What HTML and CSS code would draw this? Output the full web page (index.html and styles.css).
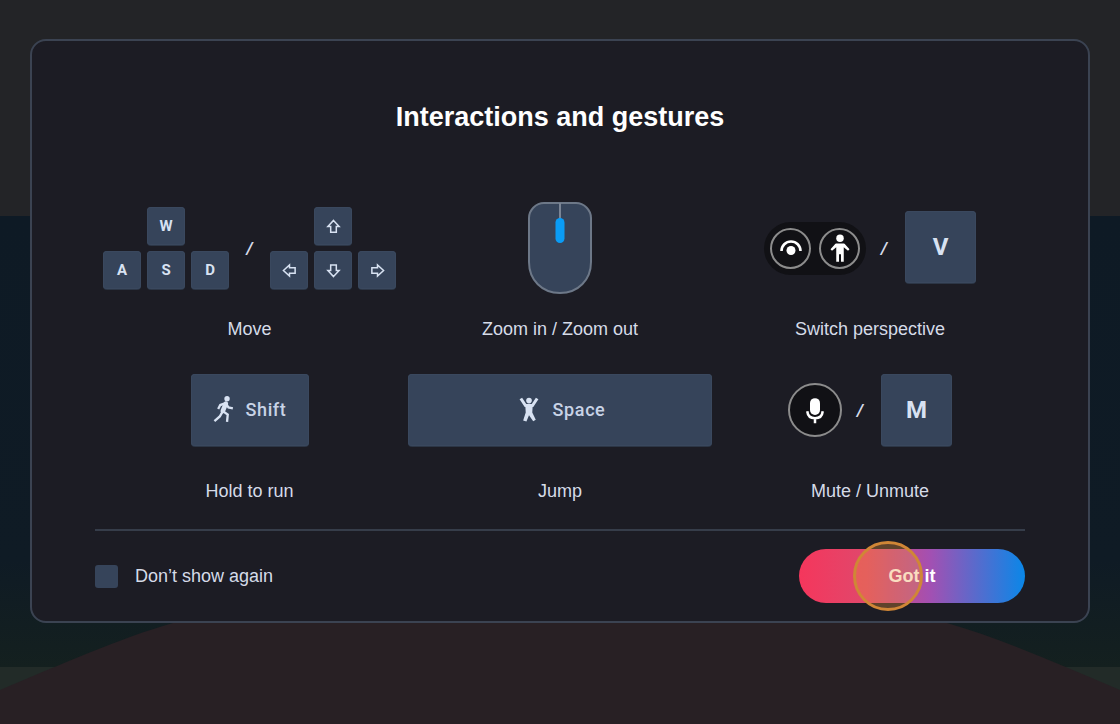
FILE: index.html
```html
<!DOCTYPE html>
<html lang="en">
<head>
    <meta charset="UTF-8">
    <meta name="viewport" content="width=device-width, initial-scale=1.0">
    <title>Interactions and gestures</title>
    <link rel="stylesheet" href="styles.css">
</head>
<body>
<svg class="scenery" viewBox="0 0 1120 724" width="1120" height="724" aria-hidden="true">
    <path class="ground" d="M0 667H1120V724H0Z"/>
    <path class="hill" d="M0 690C60 665 120 638 173 623C250 605 400 600 560 600C720 600 870 605 947 623C1000 638 1060 665 1120 690V724H0Z"/>
</svg>

<div class="modal">
    <h1 class="title">Interactions and gestures</h1>

    <div class="controls">
        <div class="control">
            <div class="control-keys">
                <div class="key-cluster">
                    <span class="key key-small key-top">W</span>
                    <span class="key key-small">A</span>
                    <span class="key key-small">S</span>
                    <span class="key key-small">D</span>
                </div>
                <span class="slash slash-wide">/</span>
                <div class="key-cluster">
                    <span class="key key-small key-top">
                        <svg class="arrow" viewBox="0 0 16 16"><path d="M8 1.5L14 8H11V14H5V8H2Z"/></svg>
                    </span>
                    <span class="key key-small">
                        <svg class="arrow" viewBox="0 0 16 16"><path d="M1.5 8L8 2V5H14V11H8V14Z"/></svg>
                    </span>
                    <span class="key key-small">
                        <svg class="arrow" viewBox="0 0 16 16"><path d="M8 14.5L14 8H11V2H5V8H2Z"/></svg>
                    </span>
                    <span class="key key-small">
                        <svg class="arrow" viewBox="0 0 16 16"><path d="M14.5 8L8 2V5H2V11H8V14Z"/></svg>
                    </span>
                </div>
            </div>
            <div class="control-label">Move</div>
        </div>

        <div class="control">
            <div class="control-keys">
                <svg class="mouse" viewBox="0 0 64 92" width="64" height="92">
                    <path class="mouse-body" d="M16 1H48C56 1 63 8 63 16V60C63 78 50 91 32 91C14 91 1 78 1 60V16C1 8 8 1 16 1Z"/>
                    <path class="mouse-line" d="M32 1V18"/>
                    <rect class="mouse-wheel" x="27.5" y="16" width="9" height="25" rx="4.5"/>
                </svg>
            </div>
            <div class="control-label">Zoom in / Zoom out</div>
        </div>

        <div class="control">
            <div class="control-keys">
                <div class="view-pill">
                    <span class="round-btn">
                        <svg viewBox="0 0 24 24" width="24" height="24">
                            <path class="view-arc" d="M2.5 15A9.5 9.5 0 0 1 21.5 15"/>
                            <circle class="icon-fill" cx="12" cy="14.5" r="4.5"/>
                        </svg>
                    </span>
                    <span class="round-btn">
                        <svg viewBox="0 0 24 24" width="30" height="30">
                            <circle class="icon-fill" cx="12" cy="4.2" r="3"/>
                            <path class="icon-fill" d="M9.4 8.4H14.6C15.4 8.4 15.8 8.7 16.2 9.1L19.6 13L18.4 14.1L15 11.4V23H12.8V17H11.2V23H9V11.4L5.6 14.1L4.4 13L7.8 9.1C8.2 8.7 8.6 8.4 9.4 8.4Z"/>
                        </svg>
                    </span>
                </div>
                <span class="slash">/</span>
                <span class="key key-big key-view">V</span>
            </div>
            <div class="control-label">Switch perspective</div>
        </div>

        <div class="control">
            <div class="control-keys">
                <span class="key key-wide key-shift">
                    <svg class="run-icon" viewBox="0 0 24 24" width="28" height="28">
                        <circle class="icon-key" cx="14.6" cy="3.2" r="2.3"/>
                        <path class="run-torso" d="M13.6 7.4L11 13.6"/>
                        <path class="run-limbs" d="M13.4 7L8.8 8.6L7 12M13.6 7.2L15.8 10.6L19.6 11.4M11 13.8L8.4 18.4L3.8 22.4M11 13.8L15.2 16.8L14.6 23"/>
                    </svg>
                    <span class="key-text">Shift</span>
                </span>
            </div>
            <div class="control-label">Hold to run</div>
        </div>

        <div class="control">
            <div class="control-keys">
                <span class="key key-wide key-space">
                    <svg viewBox="0 0 24 24" width="28" height="28">
                        <circle class="icon-key" cx="12" cy="4.8" r="2.4"/>
                        <path class="jump-limbs" d="M5 3L9 9H15L19 3"/>
                        <path class="icon-key" d="M8.8 8.5H15.2L14.8 15L17.8 21.2L15.6 22.4L12 17.4L9.8 22.8L7 21.8L9.2 15Z"/>
                    </svg>
                    <span class="key-text">Space</span>
                </span>
            </div>
            <div class="control-label">Jump</div>
        </div>

        <div class="control">
            <div class="control-keys">
                <span class="round-btn round-btn-mic">
                    <svg viewBox="0 0 24 24" width="30" height="30">
                        <rect class="icon-fill" x="8" y="2.5" width="8" height="13.5" rx="4"/>
                        <path class="mic-stand" d="M5.8 13C6.2 16.8 8.6 18.6 12 18.6C15.4 18.6 17.8 16.8 18.2 13M12 18.6V22.5"/>
                    </svg>
                </span>
                <span class="slash">/</span>
                <span class="key key-big">M</span>
            </div>
            <div class="control-label">Mute / Unmute</div>
        </div>
    </div>

    <div class="footer">
        <label class="dont-show">
            <span class="checkbox"></span>
            Don’t show again
        </label>
        <button class="got-it" type="button">
            Got it
            <span class="click-ring"></span>
        </button>
    </div>
</div>
</body>
</html>
```

FILE: styles.css
```css
* {
    box-sizing: border-box;
}

html, body {
    height: 100%;
}

body {
    margin: 0;
    padding: 39px 30px 0;
    overflow: hidden;
    font-family: "Liberation Sans", Arial, sans-serif;
    background: linear-gradient(to bottom, #232427 0, #232427 216px, #0e1a25 216px, #0f1b25 560px, #14201f 667px);
}

.scenery {
    position: absolute;
    left: 0;
    top: 0;
}

.ground {
    fill: #222b28;
}

.hill {
    fill: #282024;
}

.modal {
    position: relative;
    height: 584px;
    padding: 61px 63px 0;
    background-color: #1c1c24;
    border: 2px solid #3b4352;
    border-radius: 16px;
}

.title {
    margin: 0 0 71px;
    font-size: 27px;
    line-height: 30px;
    font-weight: 700;
    text-align: center;
    color: #fff;
}

.controls {
    display: grid;
    grid-template-columns: repeat(3, 1fr);
    row-gap: 26px;
}

.control {
    display: flex;
    flex-direction: column;
    align-items: center;
    gap: 26px;
}

.control:nth-child(3n+1) {
    padding-right: 1px;
}

.control-keys {
    display: flex;
    align-items: center;
    justify-content: center;
    height: 90px;
}

.control-label {
    font-size: 18px;
    line-height: 20px;
    color: #d5dbe8;
}

.key {
    display: flex;
    align-items: center;
    justify-content: center;
    font-family: Roboto, "Liberation Sans", sans-serif;
    font-weight: 700;
    color: #d8e2f2;
    background-color: #36445a;
    border-radius: 4px;
    box-shadow: inset 0 0 0 1px #3a485e, 0 1px 0 #2c3646;
}

.key-cluster {
    display: grid;
    grid-template-columns: repeat(3, 38px);
    grid-auto-rows: 38px;
    gap: 6px;
}

.key-small {
    font-size: 15px;
}

.key-top {
    grid-column: 2;
}

.key-top + .key {
    grid-column: 1;
}

.key-big {
    width: 71px;
    height: 72px;
    font-size: 24px;
}

.key-view {
    margin-bottom: 2px;
}

.key-wide {
    height: 72px;
    gap: 8px;
    padding-bottom: 2px;
    font-size: 18px;
    font-weight: 500;
    letter-spacing: 0.6px;
    color: #c8d3e6;
}

.key-shift {
    width: 118px;
}

.key-shift .run-icon {
    margin-left: -3px;
}

.key-space {
    width: 304px;
    gap: 10px;
}

.key-text {
    font-weight: 500;
}

.arrow {
    width: 15px;
    height: 15px;
    fill: none;
    stroke: #d8e2f2;
    stroke-width: 1.6;
}

.slash {
    width: 39px;
    padding-right: 3px;
    text-align: center;
    font-family: Roboto, sans-serif;
    font-size: 17px;
    font-style: italic;
    font-weight: 700;
    color: #d5dbe8;
}

.slash-wide {
    width: 41px;
    padding-right: 0;
}

.mouse-body {
    fill: #36445a;
    stroke: #6d7888;
    stroke-width: 2;
}

.mouse-line {
    fill: none;
    stroke: #7b8595;
    stroke-width: 2;
}

.mouse-wheel {
    fill: #0a9cf5;
}

.view-pill {
    display: flex;
    align-items: center;
    gap: 8px;
    height: 53px;
    padding: 0 6px;
    background-color: #111115;
    border-radius: 27px;
}

.round-btn {
    display: flex;
    align-items: center;
    justify-content: center;
    width: 41px;
    height: 41px;
    border: 2px solid #8c8c8c;
    border-radius: 50%;
}

.round-btn-mic {
    width: 54px;
    height: 54px;
    background-color: #111115;
}

.icon-fill {
    fill: #fff;
}

.icon-key {
    fill: #d8e2f2;
}

.view-arc, .mic-stand {
    fill: none;
    stroke: #fff;
    stroke-width: 2;
}

.view-arc {
    stroke-width: 2.6;
}

.jump-limbs {
    fill: none;
    stroke: #d8e2f2;
    stroke-width: 2.6;
}

.run-torso {
    fill: none;
    stroke: #d8e2f2;
    stroke-width: 4;
    stroke-linecap: round;
}

.run-limbs {
    fill: none;
    stroke: #d8e2f2;
    stroke-width: 2;
}

.footer {
    display: flex;
    align-items: center;
    justify-content: space-between;
    margin-top: 28px;
    padding-top: 18px;
    border-top: 2px solid #363d4a;
}

.dont-show {
    display: flex;
    align-items: center;
    gap: 17px;
    font-size: 18px;
    color: #d5dbe8;
}

.checkbox {
    width: 23px;
    height: 23px;
    background-color: #36445a;
    border-radius: 3px;
}

.got-it {
    position: relative;
    width: 226px;
    height: 54px;
    padding: 0;
    border: none;
    border-radius: 27px;
    font-family: "Liberation Sans", Arial, sans-serif;
    font-size: 18px;
    font-weight: 700;
    color: #fff;
    background: linear-gradient(to right, #f5365c 0, #e0486c 30%, #a350b2 58%, #0a87e8 100%);
}

/* cursor highlight from the recording, sits over the button */
.click-ring {
    position: absolute;
    left: 54px;
    top: -8px;
    width: 70px;
    height: 70px;
    border: 3px solid #d08636;
    border-radius: 50%;
    background-color: rgba(240, 150, 60, 0.32);
}
```
